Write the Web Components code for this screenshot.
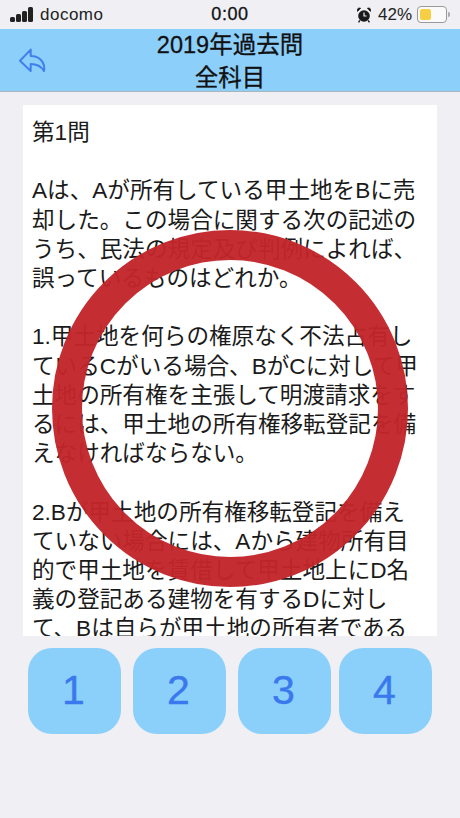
<!DOCTYPE html>
<html lang="ja">
<head>
<meta charset="utf-8">
<title>2019年過去問</title>
<style>
  html, body { margin: 0; height: 100%; }
  body {
    background: #efeff4;
    font-family: "Liberation Sans", "Noto Sans CJK JP", sans-serif;
    color: #111;
    overflow: hidden;
  }
</style>
</head>
<body>
<quiz-screen>
  <status-bar slot="status" carrier="docomo" time="0:00" battery="42%"></status-bar>
  <nav-bar slot="nav">
    <span>2019年過去問</span>
    <span>全科目</span>
  </nav-bar>
  <question-card slot="card">第1問

Aは、Aが所有している甲土地をBに売
却した。この場合に関する次の記述の
うち、民法の規定及び判例によれば、
誤っているものはどれか。

1.甲土地を何らの権原なく不法占有し
ているCがいる場合、BがCに対して甲
土地の所有権を主張して明渡請求をす
るには、甲土地の所有権移転登記を備
えなければならない。

2.Bが甲土地の所有権移転登記を備え
ていない場合には、Aから建物所有目
的で甲土地を賃借して甲土地上にD名
義の登記ある建物を有するDに対し
て、Bは自らが甲土地の所有者である</question-card>
  <answer-row slot="answers">
    <answer-button>1</answer-button>
    <answer-button>2</answer-button>
    <answer-button>3</answer-button>
    <answer-button>4</answer-button>
  </answer-row>
  <result-mark slot="mark"></result-mark>
</quiz-screen>

<script>
class QuizScreen extends HTMLElement {
  constructor() {
    super();
    const shadow = this.attachShadow({ mode: "open" });
    shadow.innerHTML = `
      <style>
        :host { display: flex; flex-direction: column; position: relative; width: 460px; height: 818px; overflow: hidden; }
      </style>
      <slot name="status"></slot>
      <slot name="nav"></slot>
      <slot name="card"></slot>
      <slot name="answers"></slot>
      <slot name="mark"></slot>`;
  }
}

class StatusBar extends HTMLElement {
  constructor() {
    super();
    const shadow = this.attachShadow({ mode: "open" });
    shadow.innerHTML = `
      <style>
        :host { display: grid; grid-template-columns: 1fr auto 1fr; align-items: center; height: 29px; padding: 0 10px; font-size: 17px; color: #222; }
        .left, .right { display: flex; align-items: center; }
        .left { gap: 7px; letter-spacing: .5px; }
        .right { justify-content: flex-end; }
        .time { font-weight: 500; font-size: 18px; letter-spacing: .6px; color: #111; -webkit-text-stroke: .3px #111; }
        .bars { display: flex; align-items: flex-end; gap: 1px; height: 15px; }
        .bars i { display: block; width: 5px; background: #222; border-radius: 1.5px; }
        .alarm { margin-right: 7px; }
        .pct { margin-right: 5px; }
        .battery { display: flex; align-items: center; }
        .shell { box-sizing: border-box; width: 30px; height: 17px; padding: 2px; border: 1px solid #999; border-radius: 4px; background: #fafafa; }
        .fill { width: 46%; height: 100%; background: #f6cf45; border-radius: 2px; }
        .tip { width: 2px; height: 5px; margin-left: 1px; background: #aaa; border-radius: 0 2px 2px 0; }
      </style>
      <div class="left">
        <div class="bars"><i style="height:5px"></i><i style="height:8px"></i><i style="height:11px"></i><i style="height:15px"></i></div>
        <span class="carrier"></span>
      </div>
      <div class="time"></div>
      <div class="right">
        <svg class="alarm" width="14" height="16" viewBox="0 0 14 16">
          <circle cx="7" cy="9" r="5.8" fill="#1a1a1a"/>
          <path d="M0.6 4.4 L3.6 1.2 Q1 0.6 0.4 2.2 Z M13.4 4.4 L10.4 1.2 Q13 0.6 13.6 2.2 Z" fill="#1a1a1a" stroke="#1a1a1a" stroke-width=".8"/>
          <path d="M7 5.6 V9 H9.6" fill="none" stroke="#efeff4" stroke-width="1.2"/>
          <path d="M2.8 13.4 L1.6 15.4 M11.2 13.4 L12.4 15.4" stroke="#1a1a1a" stroke-width="1.4"/>
        </svg>
        <span class="pct"></span>
        <div class="battery"><div class="shell"><div class="fill"></div></div><div class="tip"></div></div>
      </div>`;
  }
  connectedCallback() {
    this.shadowRoot.querySelector(".carrier").textContent = this.getAttribute("carrier");
    this.shadowRoot.querySelector(".time").textContent = this.getAttribute("time");
    this.shadowRoot.querySelector(".pct").textContent = this.getAttribute("battery");
  }
}

class NavBar extends HTMLElement {
  constructor() {
    super();
    const shadow = this.attachShadow({ mode: "open" });
    shadow.innerHTML = `
      <style>
        :host { display: block; position: relative; height: 63px; background: #8ccffb; border-bottom: 1px solid #a9b4bc; box-sizing: border-box; }
        .title { display: flex; flex-direction: column; align-items: center; height: 100%; font-size: 23.5px; line-height: 33px; color: #111; -webkit-text-stroke: .3px #111; }
        ::slotted(span) { display: block; }
        svg { position: absolute; left: 18px; top: 19px; }
      </style>
      <svg width="29" height="26" viewBox="0 0 29 26" fill="none" stroke="#3f7fee" stroke-width="2" stroke-linejoin="round" stroke-linecap="round">
        <path d="M12.7 1.6 L2 12.7 L12.7 23 V16 C18 16 23 18 26 23 C27.5 15 22 8 12.7 8 Z"/>
      </svg>
      <div class="title"><slot></slot></div>`;
  }
}

class QuestionCard extends HTMLElement {
  constructor() {
    super();
    const shadow = this.attachShadow({ mode: "open" });
    shadow.innerHTML = `
      <style>
        :host { display: block; box-sizing: border-box; width: 414px; height: 531px; margin: 13px 0 0 23px; padding: 13px 0 0 9px; background: #fff; overflow: hidden; font-size: 22.6px; line-height: 29.2px; color: #1a1a1a; }
        .text { white-space: pre; }
      </style>
      <div class="text"><slot></slot></div>`;
  }
}

class AnswerRow extends HTMLElement {
  constructor() {
    super();
    const shadow = this.attachShadow({ mode: "open" });
    shadow.innerHTML = `
      <style>
        :host { display: flex; gap: 12px; margin: 12px 0 0 28px; }
        ::slotted(:last-child) { margin-left: -4px; }
      </style>
      <slot></slot>`;
  }
}

class AnswerButton extends HTMLElement {
  constructor() {
    super();
    const shadow = this.attachShadow({ mode: "open" });
    shadow.innerHTML = `
      <style>
        :host { display: flex; align-items: center; justify-content: center; width: 93px; height: 86px; background: #8bd0fb; border-radius: 24px; color: #3a78ee; font-size: 41px; padding: 0 2px 2px 0; box-sizing: border-box; -webkit-text-stroke: .4px #3a78ee; }
      </style>
      <slot></slot>`;
  }
}

class ResultMark extends HTMLElement {
  constructor() {
    super();
    const shadow = this.attachShadow({ mode: "open" });
    shadow.innerHTML = `
      <style>
        :host { position: absolute; left: 52px; top: 230px; width: 356px; height: 357px; pointer-events: none; }
        svg { display: block; width: 100%; height: 100%; }
      </style>
      <svg viewBox="0 0 356 357">
        <ellipse cx="178" cy="178.5" rx="163" ry="163.5" fill="none" stroke="#c2252a" stroke-opacity=".96" stroke-width="30"/>
      </svg>`;
  }
}

customElements.define("quiz-screen", QuizScreen);
customElements.define("status-bar", StatusBar);
customElements.define("nav-bar", NavBar);
customElements.define("question-card", QuestionCard);
customElements.define("answer-row", AnswerRow);
customElements.define("answer-button", AnswerButton);
customElements.define("result-mark", ResultMark);
</script>
</body>
</html>
